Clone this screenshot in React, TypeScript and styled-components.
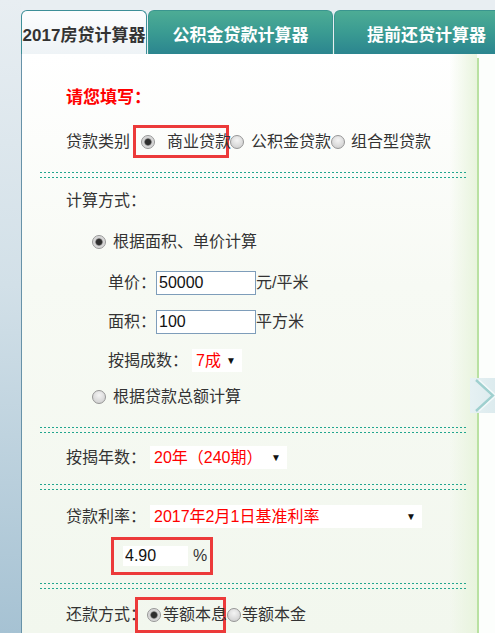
import React from "react";
import styled, { createGlobalStyle } from "styled-components";

const GlobalStyle = createGlobalStyle`
  html, body {
    margin: 0;
    padding: 0;
    overflow: hidden;
  }
  body {
    font-family: "Liberation Sans", "Noto Sans CJK SC", sans-serif;
    font-size: 16px;
    color: #333;
  }
`;

const Page = styled.div`
  display: flex;
  width: 495px;
  height: 633px;
  overflow: hidden;
  background: linear-gradient(to bottom, #e8eef2 0%, #d2e0e8 45%, #a6c2d3 100%);
`;

const SideStrip = styled.div`
  flex: none;
  width: 21px;
`;

const Main = styled.div`
  flex: 1;
  min-width: 0;
  display: flex;
  flex-direction: column;
  background: #e8eef2;
`;

const TabBar = styled.div`
  display: flex;
  gap: 1px;
  padding-top: 10px;
  height: 44px;
`;

const Tab = styled.div<{ $active?: boolean; $w: number }>`
  flex: none;
  width: ${(p) => p.$w}px;
  height: 44px;
  box-sizing: border-box;
  display: flex;
  align-items: center;
  justify-content: center;
  padding-top: 1px;
  white-space: nowrap;
  font-family: "Liberation Sans", "Noto Sans CJK SC", sans-serif;
  font-size: 17px;
  font-weight: bold;
  border: 1px solid ${(p) => (p.$active ? "#3d8f98" : "#3a958f")};
  border-bottom: none;
  border-radius: 6px 6px 0 0;
  color: ${(p) => (p.$active ? "#333" : "#fff")};
  background: ${(p) =>
    p.$active
      ? "linear-gradient(to bottom, #fcfdfe, #eef3f6)"
      : "linear-gradient(to bottom, #4dac95 0%, #3a9b92 50%, #2b858f 100%)"};
`;

const Content = styled.div`
  flex: 1;
  display: flex;
  position: relative;
  background: #fcfefc;
`;

const Panel = styled.div`
  flex: none;
  width: 456px;
  box-sizing: border-box;
  border-left: 1px solid #6792a8;
  padding-top: 26px;
  display: flex;
  flex-direction: column;
  background: linear-gradient(to right, rgba(235, 246, 225, 0) 94%, #e8f4dd 100%),
    linear-gradient(to bottom, #ffffff 0%, #f7faf4 40%, #f2f7ee 100%);
`;

const GreenRule = styled.div`
  flex: none;
  width: 2px;
  margin-top: 4px;
  background: #b9e1a2;
`;

const Row = styled.div<{ $h: number; $mt: number; $indent?: number }>`
  display: flex;
  align-items: center;
  height: ${(p) => p.$h}px;
  margin-top: ${(p) => p.$mt}px;
  padding-left: ${(p) => p.$indent ?? 44}px;
  white-space: nowrap;
  line-height: 1;
`;

const Title = styled.span`
  color: #ff0000;
  font-weight: bold;
  font-size: 17px;
`;

const Label = styled.span<{ $ml?: number }>`
  margin-left: ${(p) => p.$ml ?? 0}px;
  color: #333;
`;

const Divider = styled.div<{ $mt: number }>`
  height: 6px;
  margin: ${(p) => p.$mt}px 10px 0 18px;
  background-image: repeating-linear-gradient(to right, #22a68e 0 2px, transparent 2px 4px),
    repeating-linear-gradient(to right, #22a68e 0 2px, transparent 2px 4px);
  background-size: 100% 1px;
  background-position: 0 0, 0 100%;
  background-repeat: no-repeat;
`;

const Radio = styled.span<{ $checked?: boolean; $ml?: number }>`
  flex: none;
  width: 14px;
  height: 14px;
  box-sizing: border-box;
  margin-left: ${(p) => p.$ml ?? 0}px;
  border-radius: 50%;
  border: 1px solid #969696;
  background: ${(p) =>
    p.$checked
      ? "radial-gradient(circle, #2e2e2e 0 2.5px, #5a5a5a 3.2px, #cfcfcf 4px, #eeeeee 100%)"
      : "radial-gradient(circle at 50% 35%, #f4f4f4 0%, #d6d6d6 70%, #c4c4c4 100%)"};
`;

const Highlight = styled.div<{ $w: number; $h: number; $ml?: number }>`
  flex: none;
  display: flex;
  align-items: center;
  width: ${(p) => p.$w}px;
  height: ${(p) => p.$h}px;
  margin-left: ${(p) => p.$ml ?? 0}px;
  box-sizing: border-box;
  border: 3px solid #ec3a3a;
  white-space: nowrap;
`;

const Field = styled.input<{ $w: number }>`
  flex: none;
  width: ${(p) => p.$w}px;
  height: 24px;
  box-sizing: border-box;
  margin: 0;
  padding: 0 2px;
  border: 1px solid #7e9dba;
  background: #fff;
  font-family: "Liberation Sans", sans-serif;
  font-size: 16px;
  color: #111;
  outline: none;
`;

const RateField = styled.input`
  flex: none;
  width: 65px;
  height: 20px;
  box-sizing: border-box;
  margin: 0 0 0 9px;
  padding: 0 2px;
  border: none;
  background: #fff;
  font-family: "Liberation Sans", sans-serif;
  font-size: 16px;
  color: #111;
  outline: none;
`;

const Select = styled.div<{ $w: number; $ml: number }>`
  flex: none;
  display: flex;
  align-items: center;
  justify-content: space-between;
  width: ${(p) => p.$w}px;
  height: 23px;
  box-sizing: border-box;
  margin-left: ${(p) => p.$ml}px;
  padding: 0 6px 0 4px;
  background: #fff;
  color: #ff0000;
  font-size: 16px;
`;

const Caret = styled.span`
  font-size: 10px;
  color: #111;
`;

const SideArrow = styled.div`
  position: absolute;
  left: 449px;
  top: 324px;
  width: 26px;
  height: 35px;
  background: linear-gradient(to right, #e6f1f3, #dcebee);
`;

const Chevron = () => (
  <svg width="26" height="35" viewBox="0 0 26 35">
    <polyline points="6,2 23,17.5 6,33" fill="none" stroke="#9fd0cf" strokeWidth="2.4" />
    <polyline points="9,2 26,17.5 9,33" fill="none" stroke="#f4fafa" strokeWidth="1.2" />
  </svg>
);

const DropDown = ({ text, w, ml }: { text: string; w: number; ml: number }) => (
  <Select $w={w} $ml={ml}>
    <span>{text}</span>
    <Caret>▼</Caret>
  </Select>
);

export default function App() {
  return (
    <>
      <GlobalStyle />
      <Page>
        <SideStrip />
        <Main>
          <TabBar>
            <Tab $active $w={126}>2017房贷计算器</Tab>
            <Tab $w={185}>公积金贷款计算器</Tab>
            <Tab $w={185}>提前还贷计算器</Tab>
          </TabBar>
          <Content>
            <Panel>
              <Row $h={34} $mt={0}>
                <Title>请您填写：</Title>
              </Row>

              <Row $h={33} $mt={11}>
                <Label>贷款类别</Label>
                <Highlight $w={96} $h={33} $ml={3}>
                  <Radio $checked $ml={5} />
                  <Label $ml={12}>商业贷款</Label>
                </Highlight>
                <Radio $ml={1} />
                <Label $ml={7}>公积金贷款</Label>
                <Radio $ml={0} />
                <Label $ml={6}>组合型贷款</Label>
              </Row>

              <Divider $mt={14} />

              <Row $h={22} $mt={12}>
                <Label>计算方式：</Label>
              </Row>
              <Row $h={22} $mt={19} $indent={70}>
                <Radio $checked />
                <Label $ml={7}>根据面积、单价计算</Label>
              </Row>
              <Row $h={26} $mt={17} $indent={86}>
                <Label>单价：</Label>
                <Field $w={100} readOnly defaultValue="50000" />
                <Label>元/平米</Label>
              </Row>
              <Row $h={26} $mt={13} $indent={86}>
                <Label>面积：</Label>
                <Field $w={100} readOnly defaultValue="100" />
                <Label>平方米</Label>
              </Row>
              <Row $h={23} $mt={14} $indent={86}>
                <Label>按揭成数：</Label>
                <DropDown text="7成" w={50} ml={4} />
              </Row>
              <Row $h={22} $mt={14} $indent={70}>
                <Radio />
                <Label $ml={7}>根据贷款总额计算</Label>
              </Row>

              <Divider $mt={19} />

              <Row $h={23} $mt={13}>
                <Label>按揭年数：</Label>
                <DropDown text="20年（240期）" w={137} ml={4} />
              </Row>

              <Divider $mt={15} />

              <Row $h={23} $mt={15}>
                <Label>贷款利率：</Label>
                <DropDown text="2017年2月1日基准利率" w={272} ml={4} />
              </Row>
              <Row $h={38} $mt={9} $indent={89}>
                <Highlight $w={102} $h={38}>
                  <RateField readOnly defaultValue="4.90" />
                  <Label $ml={5}>%</Label>
                </Highlight>
              </Row>

              <Divider $mt={8} />

              <Row $h={36} $mt={8}>
                <Label>还款方式：</Label>
                <Highlight $w={91} $h={36} $ml={-11}>
                  <Radio $checked $ml={9} />
                  <Label $ml={2}>等额本息</Label>
                </Highlight>
                <Radio $ml={1} />
                <Label $ml={1}>等额本金</Label>
              </Row>
            </Panel>
            <GreenRule />
            <SideArrow>
              <Chevron />
            </SideArrow>
          </Content>
        </Main>
      </Page>
    </>
  );
}
